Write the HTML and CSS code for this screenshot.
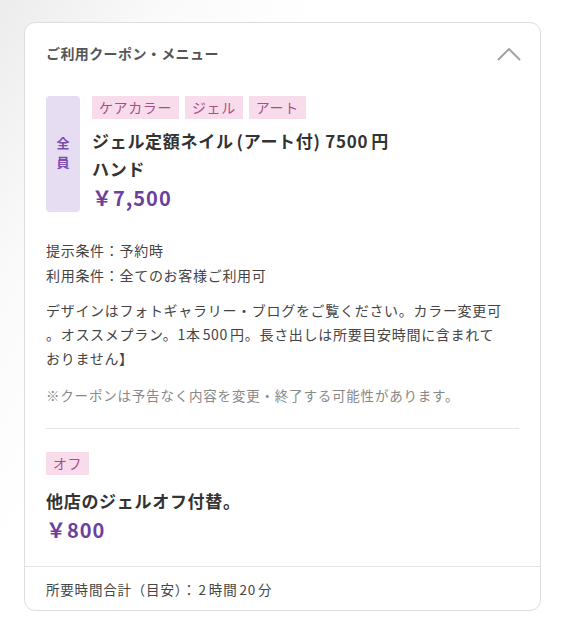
FILE: index.html
```html
<!DOCTYPE html>
<html lang="ja">
<head>
<meta charset="UTF-8">
<meta name="viewport" content="width=device-width, initial-scale=1.0">
<title>ご利用クーポン・メニュー</title>
<link rel="stylesheet" href="styles.css">
</head>
<body>
<div class="card">
    <div class="card-header">
        <h2>ご利用クーポン・メニュー</h2>
        <svg class="chevron" width="24" height="14" viewBox="0 0 24 14">
            <path d="M1.5 12.5 L12 2 L22.5 12.5" fill="none" stroke="#a0a0a0" stroke-width="1.8" stroke-linecap="round" stroke-linejoin="round"/>
        </svg>
    </div>
    <div class="card-body">
        <div class="coupon">
            <div class="target-badge"><span>全</span><span>員</span></div>
            <div class="coupon-info">
                <div class="tags">
                    <span class="tag">ケアカラー</span>
                    <span class="tag">ジェル</span>
                    <span class="tag">アート</span>
                </div>
                <p class="coupon-name">ジェル定額ネイル<span class="sp-l">(アート付)</span> 7500<span class="sp-l">円</span><br>ハンド</p>
                <p class="price">￥7,500</p>
            </div>
        </div>
        <div class="conditions">
            <p>提示条件：予約時</p>
            <p>利用条件：全てのお客様ご利用可</p>
        </div>
        <p class="description">デザインはフォトギャラリー・ブログをご覧ください。カラー変更可<br>。オススメプラン。1本<span class="sp">500</span>円。長さ出しは所要目安時間に含まれて<br>おりません】</p>
        <p class="notice">※クーポンは予告なく内容を変更・終了する可能性があります。</p>
        <hr class="divider">
        <div class="menu">
            <div class="tags">
                <span class="tag">オフ</span>
            </div>
            <p class="coupon-name">他店のジェルオフ付替。</p>
            <p class="price">￥800</p>
        </div>
    </div>
    <div class="card-footer">所要時間合計（目安）：<span class="sp">2</span>時間<span class="sp">20</span>分</div>
</div>
</body>
</html>
```

FILE: styles.css
```css
* {
    margin: 0;
    padding: 0;
    box-sizing: border-box;
}
body {
    min-height: 100vh;
    background: linear-gradient(120deg, #ececec 0%, #fafafa 18%, #ffffff 35%);
    font-family: 'Noto Sans CJK JP', 'Noto Sans', sans-serif;
    color: #3a3a3a;
    padding: 22px 24px 0 24px;
}
.card {
    width: 517px;
    height: 589px;
    background: #fff;
    border: 1px solid #dedede;
    border-radius: 11px;
    display: flex;
    flex-direction: column;
}
.card-header {
    display: flex;
    justify-content: space-between;
    align-items: flex-start;
    padding: 20px 19px 0 21px;
    height: 60px;
}
.card-header h2 {
    font-size: 14px;
    font-weight: 700;
    line-height: 20px;
    color: #555;
    letter-spacing: 0.4px;
}
.chevron {
    margin-top: 4px;
}
.card-body {
    padding: 13px 21px 20px 21px;
    flex: 1;
}
.coupon {
    display: flex;
    gap: 12px;
}
.target-badge {
    width: 34px;
    height: 116px;
    background: #e6ddf3;
    border-radius: 4px;
    color: #7b4cae;
    font-size: 13px;
    font-weight: 700;
    line-height: 19px;
    display: flex;
    flex-direction: column;
    align-items: center;
    justify-content: center;
    padding-bottom: 4px;
}
.tags {
    display: flex;
    gap: 6px;
}
.tag {
    background: #f8dcec;
    color: #ac4c86;
    font-size: 14px;
    line-height: 23px;
    padding: 0 7px;
    letter-spacing: 0.6px;
}
.coupon-name {
    margin-top: 8px;
    font-size: 17px;
    font-weight: 600;
    line-height: 28px;
    color: #333;
    letter-spacing: 0.7px;
}
.sp {
    margin: 0 2px;
}
.sp-l {
    margin-left: 3px;
}
.price {
    font-size: 20px;
    font-weight: 600;
    line-height: 30px;
    color: #6c3f9e;
    letter-spacing: 1px;
}
.conditions {
    margin-top: 25px;
    font-size: 14px;
    line-height: 25px;
    letter-spacing: 0.7px;
    color: #444;
}
.description {
    margin-top: 10px;
    font-size: 14px;
    line-height: 24px;
    letter-spacing: 0.7px;
    color: #444;
}
.notice {
    margin-top: 14px;
    font-size: 13.5px;
    line-height: 22px;
    letter-spacing: 0.8px;
    color: #888;
}
.divider {
    border: none;
    border-top: 1.5px solid #e4e4e4;
    margin-top: 22px;
}
.menu {
    padding-top: 23px;
}
.menu .coupon-name {
    margin-top: 12px;
}
.card-footer {
    border-top: 1.5px solid #e4e4e4;
    height: 44px;
    padding: 0 21px;
    display: flex;
    align-items: center;
    font-size: 13.5px;
    letter-spacing: 0.8px;
    color: #444;
}
```
